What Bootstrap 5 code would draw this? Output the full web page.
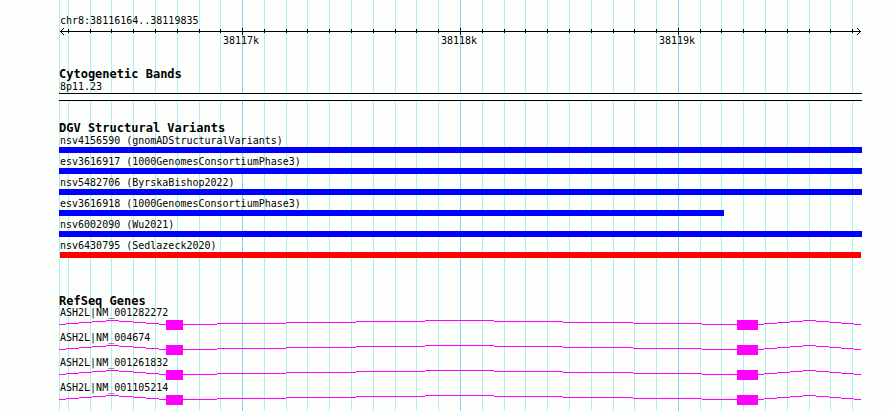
<!DOCTYPE html>
<html lang="en">
<head>
<meta charset="utf-8">
<meta name="viewport" content="width=device-width, initial-scale=1">
<title>chr8:38116164..38119835</title>
<link href="https://cdn.jsdelivr.net/npm/bootstrap@5.3.0/dist/css/bootstrap.min.css" rel="stylesheet">
<style>
body { background: #fdfffc; color: #000; font-family: "DejaVu Sans Mono", "Liberation Mono", monospace; font-size: 10px; line-height: 12px; }
.browser { padding: 15px 28px 0 59px; overflow: hidden; }
.tracks { z-index: 0; }
.grid-lines { top: -15px; left: 0; height: 100vh; min-height: 100%; z-index: -1; }
svg { display: block; width: 100%; shape-rendering: crispEdges; }
.minor { fill: #afeeee; }
.major { fill: #87ceeb; }
.label { padding-left: 1px; white-space: nowrap; }
h2.track-title { font-size: 12px; line-height: 13px; font-weight: 700; margin: 0; white-space: nowrap; }
.ruler { height: 8px; }
.scale { height: 12px; }
.scale span { transform: translateX(-50%); top: 0; }
.band { height: 8px; border: solid #000; border-width: 1px 0; background: #fff; }
.variant { height: 21px; }
.variant-bar { height: 6px; background: #00f; }
.loss { background: #f00; margin: 0 1px; }
.gene { height: 25px; }
.gene .label { line-height: 10px; padding-bottom: 2px; }
.gene svg { height: 10px; fill: #f0f; }
.cyto, .dgv { margin-top: 21px; }
.refseq { margin-top: 34px; }
</style>
<script src="https://cdn.jsdelivr.net/npm/bootstrap@5.3.0/dist/js/bootstrap.bundle.min.js"></script>
</head>
<body>
<main class="browser min-vh-100">
<div class="tracks position-relative">
  <svg class="grid-lines position-absolute" id="grid" viewBox="0 0 803 411" preserveAspectRatio="none" aria-hidden="true"></svg>

  <section>
    <div class="label">chr8:38116164..38119835</div>
    <svg class="ruler" id="ruler" viewBox="0 0 803 8" preserveAspectRatio="none" aria-hidden="true"></svg>
    <div class="scale position-relative" id="scale"></div>
  </section>

  <section class="cyto">
    <h2 class="track-title">Cytogenetic Bands</h2>
    <div class="label">8p11.23</div>
    <div class="band"></div>
  </section>

  <section class="dgv">
    <h2 class="track-title">DGV Structural Variants</h2>
    <div class="variant"><div class="label">nsv4156590 (gnomADStructuralVariants)</div><div class="variant-bar"></div></div>
    <div class="variant"><div class="label">esv3616917 (1000GenomesConsortiumPhase3)</div><div class="variant-bar"></div></div>
    <div class="variant"><div class="label">nsv5482706 (ByrskaBishop2022)</div><div class="variant-bar"></div></div>
    <div class="variant"><div class="label">esv3616918 (1000GenomesConsortiumPhase3)</div><div class="variant-bar" style="width: 82.8%"></div></div>
    <div class="variant"><div class="label">nsv6002090 (Wu2021)</div><div class="variant-bar"></div></div>
    <div class="variant"><div class="label">nsv6430795 (Sedlazeck2020)</div><div class="variant-bar loss"></div></div>
  </section>

  <section class="refseq">
    <h2 class="track-title">RefSeq Genes</h2>
    <div class="gene"><div class="label">ASH2L|NM_001282272</div></div>
    <div class="gene"><div class="label">ASH2L|NM_004674</div></div>
    <div class="gene"><div class="label">ASH2L|NM_001261832</div></div>
    <div class="gene"><div class="label">ASH2L|NM_001105214</div></div>
  </section>
</div>
</main>
<script>
const rect = (x, y, w, h, c = '') => `<rect x="${x}" y="${y}" width="${w}" height="${h}" class="${c}"/>`;

// Grid lines, every 100 bases; major ones every 1000
const minor = [0, 9, 31, 52, 74, 96, 118, 140, 161, 205, 227, 248, 270, 292, 314, 336, 357, 379, 423, 445, 466, 488, 510, 532, 554, 575, 597, 641, 662, 684, 706, 728, 750, 771, 793];
const major = [183, 401, 619];
document.getElementById('grid').innerHTML =
  minor.map(x => rect(x, 0, 1, 411, 'minor')).join('') +
  major.map(x => rect(x, 0, 1, 411, 'major')).join('');

// Ruler with ticks and arrow heads
let r = rect(1, 4, 801, 1);
minor.slice(1).forEach(x => r += rect(x, 2, 1, 4));
major.forEach(x => r += rect(x, 1, 1, 7));
[1, 2, 3].forEach(d => [4 - d, 4 + d].forEach(y => r += rect(1 + d, y, 1, 1) + rect(801 - d, y, 1, 1)));
document.getElementById('ruler').innerHTML = r;
document.getElementById('scale').innerHTML = major.map((x, i) =>
  `<span class="position-absolute" style="left: ${(x - 1) / 8.03}%">${38117 + i}k</span>`).join('');

// Introns as stepped lines [start, end, height], exons as boxes
const introns = [[0,7,4],[7,20,3],[20,33,2],[33,47,1],[47,60,0],[60,74,1],[74,87,2],[87,100,3],[100,107,4],
  [124,158,4],[158,227,3],[227,297,2],[297,366,1],[366,435,0],[435,504,1],[504,574,2],[574,643,3],[643,678,4],
  [699,705,4],[705,718,3],[718,731,2],[731,744,1],[744,757,0],[757,770,1],[770,782,2],[782,795,3],[795,802,4]];
const gene = introns.map(([a, b, y]) => rect(a, y, b - a, 1)).join('') + rect(107, 0, 17, 10) + rect(678, 0, 21, 10);
document.querySelectorAll('.gene').forEach(el => el.insertAdjacentHTML('beforeend',
  `<svg viewBox="0 0 803 10" preserveAspectRatio="none" aria-hidden="true">${gene}</svg>`));
</script>
</body>
</html>
